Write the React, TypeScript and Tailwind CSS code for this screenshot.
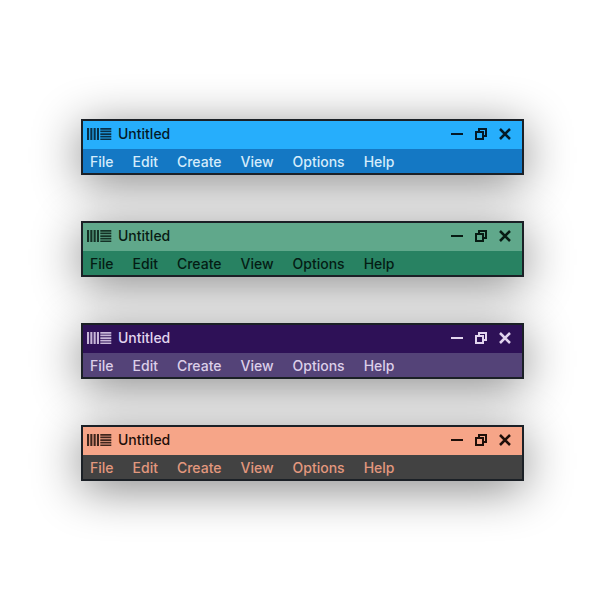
type Theme = {
  name: string;
  title: string;
  menu: string;
};

const themes: Theme[] = [
  { name: "Sky", title: "bg-[#26aefc] text-[#041a28]", menu: "bg-[#1478c4] text-[#d5ecfb]" },
  { name: "Green", title: "bg-[#60a88b] text-[#081c14]", menu: "bg-[#288262] text-[#041c14]" },
  { name: "Violet", title: "bg-[#2e1157] text-[#e2d5ee]", menu: "bg-[#544378] text-[#dccfe9]" },
  { name: "Peach", title: "bg-[#f6a588] text-[#1e0f09]", menu: "bg-[#424242] text-[#e3987e]" },
];

const menus = ["File", "Edit", "Create", "View", "Options", "Help"];

function Logo() {
  return (
    <svg viewBox="0 0 25 12" className="h-3 w-[25px]" fill="currentColor" aria-hidden="true">
      <path d="M0 0h2.1v12H0zM3.3 0h2.1v12H3.3zM6.6 0h2.1v12H6.6zM9.9 0H12v12H9.9z" opacity=".85" />
      <path d="M13.3 0h11v1.7h-11zM13.3 2.6h11v1.7h-11zM13.3 5.2h11v1.7h-11zM13.3 7.8h11v1.7h-11zM13.3 10.4h11V12h-11z" opacity=".85" />
    </svg>
  );
}

function WindowBar({ theme }: { theme: Theme }) {
  return (
    <section
      aria-label={`${theme.name} window`}
      className="relative border-2 border-[#1b2026] before:absolute before:-inset-0.5 before:-z-10 before:shadow-[0_8px_48px_rgba(0,0,0,0.48)]"
    >
      <header className={`flex h-7 items-center pr-[11px] pb-[3px] pl-1 ${theme.title}`}>
        <Logo />
        <h2 className="ml-1.5 flex-1">Untitled</h2>
        <div className="flex gap-3">
          <button type="button" aria-label="Minimize">
            <svg viewBox="0 0 12 12" className="size-3" fill="none" stroke="currentColor" strokeWidth="2">
              <path d="M0 6h12" />
            </svg>
          </button>
          <button type="button" aria-label="Restore">
            <svg viewBox="0 0 12 12" className="size-3" fill="none" stroke="currentColor" strokeWidth="2">
              <path d="M1 4h7v7H1zM4 4V1h7v7H8" />
            </svg>
          </button>
          <button type="button" aria-label="Close">
            <svg viewBox="0 0 12 12" className="size-3" fill="none" stroke="currentColor" strokeWidth="2.5">
              <path d="M1 1l10 10M11 1L1 11" />
            </svg>
          </button>
        </div>
      </header>
      <nav className={`flex h-6 items-center gap-[19px] px-[7px] pt-0.5 ${theme.menu}`}>
        {menus.map((item) => (
          <button type="button" key={item}>
            {item}
          </button>
        ))}
      </nav>
    </section>
  );
}

export default function App() {
  return (
    <main className="isolate flex min-h-screen flex-col gap-[46px] bg-white pt-[119px] pr-[76px] pb-[119px] pl-[81px] font-['Inter',sans-serif] text-sm font-medium">
      {themes.map((theme) => (
        <WindowBar key={theme.name} theme={theme} />
      ))}
    </main>
  );
}
